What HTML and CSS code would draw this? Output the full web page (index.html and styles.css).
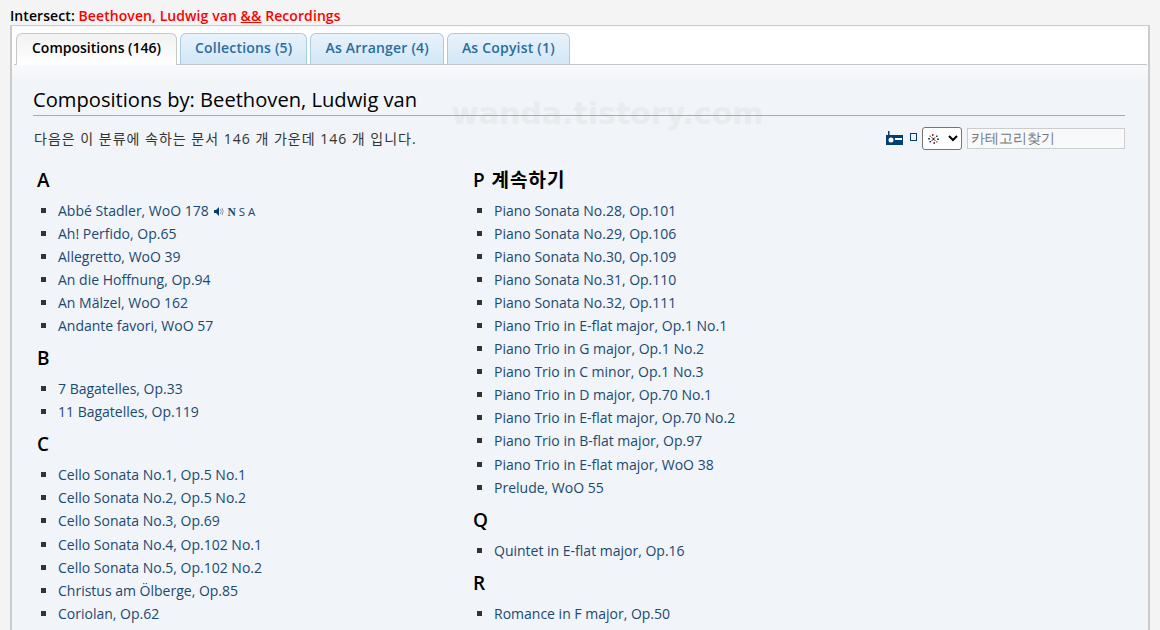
FILE: index.html
```html
<!DOCTYPE html>
<html lang="ko">
<head>
<meta charset="UTF-8">
<title>Compositions by: Beethoven, Ludwig van</title>
<link rel="stylesheet" href="styles.css">
</head>
<body>

<div class="intersect">Intersect: <span class="red">Beethoven, Ludwig van <u>&amp;&amp;</u> Recordings</span></div>

<div class="wrapper">
  <div class="tabs">
    <a class="tab active">Compositions (146)</a>
    <a class="tab">Collections (5)</a>
    <a class="tab">As Arranger (4)</a>
    <a class="tab">As Copyist (1)</a>
  </div>

  <div class="content">
    <span class="watermark">wanda.tistory.com</span>
    <h1>Compositions by: Beethoven, Ludwig van</h1>

    <div class="info">
      <p>다음은 이 분류에 속하는 문서 146 개 가운데 146 개 입니다.</p>
      <div class="tools">
        <svg class="radio" width="17" height="15" viewBox="0 0 17 15">
          <rect x="2" y="0" width="1.5" height="5" fill="#003f72"/>
          <rect x="0" y="4" width="17" height="10" fill="#003f72"/>
          <circle cx="5" cy="9" r="2.5" fill="#fff"/>
          <rect x="9" y="7" width="7" height="2" fill="#fff"/>
        </svg>
        <span class="small-box"></span>
        <span class="theme-wrap">
          <select class="theme"><option></option></select>
          <svg class="flower" width="11" height="10" viewBox="0 0 11 10">
            <g fill="#8a2f2f">
              <rect x="4" y="0" width="1.500" height="2"/>
              <rect x="5.500" y="8" width="1.500" height="2"/>
              <rect x="3.500" y="3" width="1" height="1"/>
            </g>
            <g fill="#2b4a7a">
              <rect x="0" y="4" width="2" height="1.500"/>
              <rect x="9" y="4.500" width="2" height="1.500"/>
              <rect x="6.500" y="6" width="1" height="1"/>
            </g>
            <g fill="#b5773a">
              <rect x="1.500" y="1.500" width="1.500" height="1.500"/>
              <rect x="8" y="7" width="1.500" height="1.500"/>
              <rect x="6.500" y="3" width="1" height="1"/>
            </g>
            <g fill="#333">
              <rect x="8" y="1.500" width="1.500" height="1.500"/>
              <rect x="1.500" y="7" width="1.500" height="1.500"/>
              <rect x="4.500" y="4" width="2" height="2"/>
              <rect x="3.500" y="6" width="1" height="1"/>
            </g>
          </svg>
        </span>
        <input class="search" type="text" placeholder="카테고리찾기">
      </div>
    </div>

    <div class="columns">
      <div class="col">
        <h3>A</h3>
        <ul>
          <li>Abbé Stadler, WoO 178
            <span class="marks">
              <svg width="10" height="9" viewBox="0 0 10 9"><path d="M0 3h2l3-3v9L2 6H0z" fill="#003f72"/><path d="M6.500 2q1.500 2.500 0 5M8 1q2.500 3.500 0 7" fill="none" stroke="#8a9bb0"/></svg>
              <b>N</b> S A
            </span>
          </li>
          <li>Ah! Perfido, Op.65</li>
          <li>Allegretto, WoO 39</li>
          <li>An die Hoffnung, Op.94</li>
          <li>An Mälzel, WoO 162</li>
          <li>Andante favori, WoO 57</li>
        </ul>
        <h3>B</h3>
        <ul>
          <li>7 Bagatelles, Op.33</li>
          <li>11 Bagatelles, Op.119</li>
        </ul>
        <h3>C</h3>
        <ul>
          <li>Cello Sonata No.1, Op.5 No.1</li>
          <li>Cello Sonata No.2, Op.5 No.2</li>
          <li>Cello Sonata No.3, Op.69</li>
          <li>Cello Sonata No.4, Op.102 No.1</li>
          <li>Cello Sonata No.5, Op.102 No.2</li>
          <li>Christus am Ölberge, Op.85</li>
          <li>Coriolan, Op.62</li>
        </ul>
      </div>
      <div class="col">
        <h3>P 계속하기</h3>
        <ul>
          <li>Piano Sonata No.28, Op.101</li>
          <li>Piano Sonata No.29, Op.106</li>
          <li>Piano Sonata No.30, Op.109</li>
          <li>Piano Sonata No.31, Op.110</li>
          <li>Piano Sonata No.32, Op.111</li>
          <li>Piano Trio in E-flat major, Op.1 No.1</li>
          <li>Piano Trio in G major, Op.1 No.2</li>
          <li>Piano Trio in C minor, Op.1 No.3</li>
          <li>Piano Trio in D major, Op.70 No.1</li>
          <li>Piano Trio in E-flat major, Op.70 No.2</li>
          <li>Piano Trio in B-flat major, Op.97</li>
          <li>Piano Trio in E-flat major, WoO 38</li>
          <li>Prelude, WoO 55</li>
        </ul>
        <h3>Q</h3>
        <ul>
          <li>Quintet in E-flat major, Op.16</li>
        </ul>
        <h3>R</h3>
        <ul>
          <li>Romance in F major, Op.50</li>
        </ul>
      </div>
    </div>
  </div>
</div>

</body>
</html>
```

FILE: styles.css
```css
html, body {
  height: 630px;
  overflow: hidden;
}

body {
  margin: 0;
  background-color: #f4f4f4;
  font-family: "Open Sans", "Noto Sans CJK KR", sans-serif;
  font-size: 14px;
  color: #000;
}

.intersect {
  height: 25px;
  padding: 6px 0 0 10px;
  box-sizing: border-box;
  font-size: 14px;
  font-weight: 600;
  line-height: 19px;
  letter-spacing: .08px;
}

.red {
  color: #f00;
}

.wrapper {
  margin-left: 10px;
  margin-right: 10px;
  height: 605px;
  border: 2px solid #ccc;
  border-width: 1px 2px 0 2px;
  background: linear-gradient(#f8f8f8 0, #fff 6px, #fff 38px, #f8fafc 39px, #f1f4f8 58px);
  padding-top: 7px;
  box-sizing: border-box;
}

.tabs {
  display: flex;
  gap: 3px;
  margin: 0 1px 0 2px;
  height: 31px;
  padding-left: 2px;
  border-bottom: 1px solid #c4c4c4;
}

.tab {
  height: 30px;
  padding: 0 14px;
  line-height: 28px;
  font-size: 14px;
  font-weight: 600;
  letter-spacing: .2px;
  color: #2a6d9e;
  background: linear-gradient(#e9f3fb, #d2e7f7);
  border: 1px solid #a9cbe3;
  border-bottom: none;
  border-radius: 6px 6px 0 0;
}

.tab.active {
  height: 31px;
  padding: 0 15px;
  letter-spacing: 0;
  color: #000;
  background: linear-gradient(#f2f2f2, #fff);
  border-color: #c8c8c8;
}

.content {
  position: relative;
  padding: 0 23px 0 22px;
}

.watermark {
  position: absolute;
  top: 31px;
  left: 439px;
  font-family: "DejaVu Sans", sans-serif;
  font-size: 30px;
  font-weight: 700;
  color: #e9ecef;
}

h1 {
  position: relative;
  margin: 0 0 0 -1px;
  padding-top: 20px;
  height: 51px;
  box-sizing: border-box;
  border-bottom: 1px solid #aaa;
  font-size: 20.150px;
  font-weight: 400;
  line-height: 28px;
}

.info {
  display: flex;
  justify-content: space-between;
  align-items: center;
  height: 42px;
  padding-top: 2px;
  box-sizing: border-box;
}

.info p {
  margin: 0;
  color: #333;
  font-size: 14px;
  letter-spacing: 1px;
}

.tools {
  display: flex;
  align-items: center;
}

.radio {
  margin-right: 7px;
}

.small-box {
  width: 5px;
  height: 6px;
  border: 1px solid #003f72;
  margin-right: 5px;
  margin-bottom: 2px;
}

.theme-wrap {
  position: relative;
  display: flex;
  margin-right: 5px;
}

.theme {
  width: 40px;
  height: 23px;
  border: 1px solid #767676;
  border-radius: 3px;
  background: #fff;
  font-size: 11px;
}

.flower {
  position: absolute;
  top: 7px;
  left: 6px;
}

.search {
  width: 158px;
  height: 21px;
  padding: 0 3px;
  box-sizing: border-box;
  border: 1px solid #ccc;
  background: #f7f9fb;
  font-size: 14px;
}

.columns {
  display: flex;
  margin: 6px 0 0 3px;
}

.col {
  width: 436px;
}

h3 {
  margin: 0;
  padding-top: 4px;
  font-size: 19px;
  font-weight: 600;
  line-height: 24px;
  letter-spacing: 1px;
  color: #000;
}

ul {
  list-style: square;
  margin: 0 0 5px;
  padding: 7px 0 0 21px;
}

li {
  height: 23.050px;
  line-height: 23px;
  font-size: 14px;
  color: #1a4a72;
}

li::marker {
  color: #333;
}

.marks {
  margin-left: 2px;
  font-size: 11.500px;
}

.marks b {
  font-family: "Liberation Serif", serif;
}
```
